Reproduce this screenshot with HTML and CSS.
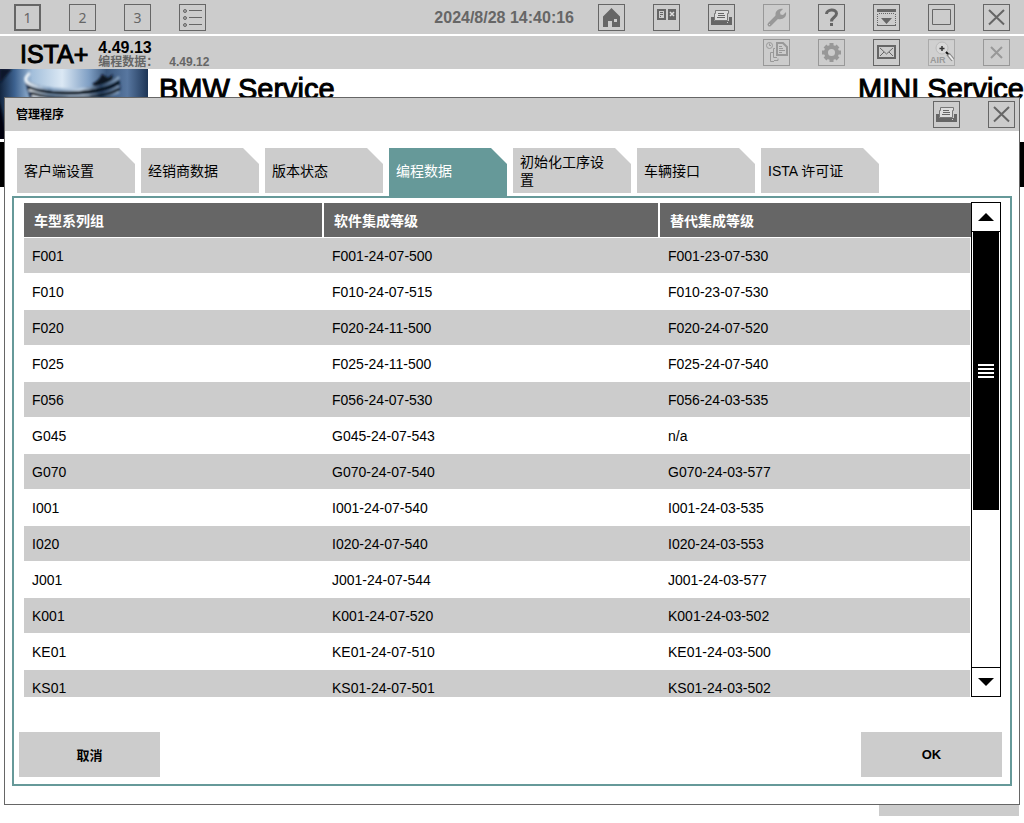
FILE: index.html
```html
<!DOCTYPE html>
<html lang="zh-CN">
<head>
<meta charset="utf-8">
<title>ISTA+</title>
<link rel="stylesheet" href="styles.css">
</head>
<body>
<svg class="defs" aria-hidden="true">
  <symbol id="printer" viewBox="0 0 25 25">
    <path fill="#666" d="M2 12h3v4h15v-4h3v8H2z"/>
    <path fill="#ddd" stroke="#777" d="M6.500 5.500h13v3h-1v7h-13v-7h1z"/>
    <path stroke="#666" d="M9 8.500h6M9 10.500h7M8 12.500h8"/>
    <path fill="#ccc" d="M18 17h1v1h-1z"/>
  </symbol>
  <symbol id="cross" viewBox="0 0 25 25"><path fill="none" stroke="#666" stroke-width="2" d="M5 5L20 19.500M20 5L5 19.500"/></symbol>
</svg>

<header>
  <div class="bar">
    <nav class="icons">
      <button class="icon current">1</button>
      <button class="icon">2</button>
      <button class="icon">3</button>
      <button class="icon" aria-label="List"><svg viewBox="0 0 25 25"><g fill="#aaa" stroke="#666"><circle cx="5" cy="6" r="1.500"/><circle cx="5" cy="13" r="1.500"/><circle cx="5" cy="20" r="1.500"/><path d="M9 5.500h13M9 12.500h13M9 19.500h13"/></g></svg></button>
    </nav>
    <time class="clock">2024/8/28 14:40:16</time>
    <nav class="icons">
      <button class="icon" aria-label="Home"><svg viewBox="0 0 25 25"><path fill="#666" d="M12.500 3L21 11.500V22h-8v-6H9v6H4V11.500z"/><path fill="#ccc" d="M15 14h3v3h-3z"/></svg></button>
      <button class="icon" aria-label="Compare"><svg viewBox="0 0 25 25"><path fill="#666" d="M3 4h9v11H3zM14 4h8v11h-8z"/><path fill="#ccc" d="M5 6h5v7H5z"/><path stroke="#666" d="M6 7.500h3M6 9.500h3M6 11.500h1"/><path stroke="#ddd" stroke-width="1.500" d="M16 7l4 4M20 7l-4 4"/></svg></button>
      <button class="icon" aria-label="Print"><svg><use href="#printer"/></svg></button>
      <button class="icon off" aria-label="Tools"><svg viewBox="0 0 25 25"><path stroke="#666" stroke-width="4" stroke-linecap="round" d="M5.500 19.500L14 11"/><path fill="#666" d="M12 12c-2-5 2-9 7-8l-3 3 .500 2.500 2.500.500 3-3c1 5-3 8-8 7z"/><path fill="#ccc" d="M5 19h1v1H5z"/></svg></button>
      <button class="icon" aria-label="Help"><svg viewBox="0 0 25 25"><path fill="none" stroke="#666" stroke-width="3" d="M7.500 9c0-5 10-5.500 10-.500 0 4-5 3.500-5 8"/><path fill="#666" d="M11 18h3v3h-3z"/></svg></button>
      <button class="icon" aria-label="Minimize"><svg viewBox="0 0 25 25"><path fill="#666" d="M3 4h19v3H3zM7 13h11l-5.500 6z"/><path fill="none" stroke="#666" d="M3 20.500h19"/><path fill="none" stroke="#666" stroke-dasharray="1 1" d="M3.500 9v11M21.500 9v11M5 8.500h16"/></svg></button>
      <button class="icon" aria-label="Maximize"><svg viewBox="0 0 25 25"><path fill="none" stroke="#666" d="M3.500 4.500h18v15h-18z"/></svg></button>
      <button class="icon" aria-label="Close"><svg><use href="#cross"/></svg></button>
    </nav>
  </div>
  <div class="bar second">
    <div class="product">
      <h1>ISTA+</h1>
      <div class="version"><strong>4.49.13</strong><p><span>编程数据：</span><span>4.49.12</span></p></div>
    </div>
    <nav class="icons">
      <button class="icon off" aria-label="History"><svg viewBox="0 0 25 25"><g fill="none" stroke="#666"><circle cx="5.500" cy="5.500" r="3"/><path d="M5.500 3.500v2H7M11 8.500H9.500v9H13M9 12.500H6.500v9H10M14 18.500v2h-4"/><path stroke-width="2" d="M13 3h6l4 4v8H13z"/><path d="M15 6.500h3M15 8.500h4M15 10.500h6M15 12.500h3"/></g></svg></button>
      <button class="icon off" aria-label="Settings"><svg viewBox="0 0 25 25"><circle cx="12.500" cy="12.500" r="5.500" fill="none" stroke="#666" stroke-width="4"/><path stroke="#666" stroke-width="4" d="M12.500 3v4M12.500 18v4M3 12.500h4M18 12.500h4M6 6l2 2M17 17l2 2M19 6l-2 2M8 17l-2 2"/></svg></button>
      <button class="icon" aria-label="Mail"><svg viewBox="0 0 25 25"><g fill="none" stroke="#666"><path stroke-width="2" d="M4 6h17v12H4z"/><path d="M6 8l6.500 6L19 8M6 16l4-4M19 16l-4-4"/></g></svg></button>
      <button class="icon air" aria-label="AIR"><svg viewBox="0 0 25 25"><path fill="#d0d0d0" d="M0 1h25v24H0z"/><circle cx="13" cy="8" r="6" fill="#d8d8d8" stroke="#bbb"/><path stroke="#333" stroke-width="1.500" d="M10.500 8.500h5M13 6v5"/><path stroke="#111" stroke-width="2" d="M17 12l3 3"/><path stroke="#888" stroke-width="4" d="M19 14l5 6"/><path stroke="#eee" stroke-width="2" d="M20 15l4 5"/></svg><span>AIR</span></button>
      <button class="icon off" aria-label="Close task"><svg viewBox="0 0 25 25"><path stroke="#666" stroke-width="2" d="M7 7l11 11M18 7L7 18"/></svg></button>
    </nav>
  </div>
</header>

<main>
  <div class="hero">
    <svg class="photo" viewBox="0 0 148 70" preserveAspectRatio="none" aria-hidden="true">
      <defs>
        <linearGradient id="sky"><stop offset="0" stop-color="#12253f"/><stop offset=".1" stop-color="#3d6290"/><stop offset=".22" stop-color="#a3bfdb"/><stop offset=".42" stop-color="#dbe8f4"/><stop offset=".6" stop-color="#7f9fc4"/><stop offset=".72" stop-color="#3b587d"/><stop offset=".86" stop-color="#5877a0"/><stop offset="1" stop-color="#1d3556"/></linearGradient>
        <linearGradient id="steel"><stop offset="0" stop-color="#f4f9fd"/><stop offset=".25" stop-color="#7f9dbe"/><stop offset=".6" stop-color="#c4d6e8"/><stop offset=".8" stop-color="#27405f"/><stop offset="1" stop-color="#8fabca"/></linearGradient>
        <filter id="soft"><feGaussianBlur stdDeviation=".8"/></filter>
      </defs>
      <path fill="url(#sky)" d="M0 0h148v70H0z"/>
      <g fill="none" filter="url(#soft)">
        <path fill="#0b182b" d="M0 0h12L0 14z"/>
        <path fill="#22395a" d="M25 13c16 12 74 14 94-5l2 12-12 10H30z"/>
        <path fill="#0a1524" d="M92 15q8-4 10-10l6 4 5-4-2 10-12 5z"/>
        <path stroke="#0b1728" stroke-width="3" d="M27 13c22 14 76 10 91-5"/>
        <path stroke="url(#steel)" stroke-width="3" d="M30 4c-7 6-6 10 8 14 28 6 68 3 81-10"/>
        <path stroke="#060e19" stroke-width="3" d="M28 19c22 8 74 7 91-6"/>
        <path stroke="url(#steel)" stroke-width="2" d="M29 21c22 9 74 8 90-4"/>
        <path stroke="#060e19" stroke-width="3" d="M31 24c24 8 72 7 88-4"/>
        <path stroke="url(#steel)" stroke-width="2" d="M32 27c24 6 70 5 87-4"/>
        <path fill="#02060b" d="M-3 28q7 15 9 45h-9z"/>
      </g>
    </svg>
    <h2>BMW Service</h2>
    <h2 class="mini">MINI Service</h2>
  </div>
  <div class="strip"></div>
</main>
<div class="under"></div>

<section class="dialog" role="dialog" aria-labelledby="title">
  <div class="titlebar">
    <h3 id="title">管理程序</h3>
    <div class="icons">
      <button class="icon" aria-label="Print"><svg><use href="#printer"/></svg></button>
      <button class="icon" aria-label="Close"><svg><use href="#cross"/></svg></button>
    </div>
  </div>
  <div class="tabs" role="tablist">
    <button class="tab" role="tab">客户端设置</button>
    <button class="tab" role="tab">经销商数据</button>
    <button class="tab" role="tab">版本状态</button>
    <button class="tab active" role="tab" aria-selected="true">编程数据</button>
    <button class="tab" role="tab">初始化工序设置</button>
    <button class="tab" role="tab">车辆接口</button>
    <button class="tab" role="tab">ISTA 许可证</button>
  </div>
  <div class="panel" role="tabpanel">
    <div class="list">
      <div class="view">
        <table>
          <colgroup><col class="c1"><col class="c2"><col></colgroup>
          <thead><tr><th>车型系列组</th><th>软件集成等级</th><th>替代集成等级</th></tr></thead>
          <tbody>
            <tr><td>F001</td><td>F001-24-07-500</td><td>F001-23-07-530</td></tr>
            <tr><td>F010</td><td>F010-24-07-515</td><td>F010-23-07-530</td></tr>
            <tr><td>F020</td><td>F020-24-11-500</td><td>F020-24-07-520</td></tr>
            <tr><td>F025</td><td>F025-24-11-500</td><td>F025-24-07-540</td></tr>
            <tr><td>F056</td><td>F056-24-07-530</td><td>F056-24-03-535</td></tr>
            <tr><td>G045</td><td>G045-24-07-543</td><td>n/a</td></tr>
            <tr><td>G070</td><td>G070-24-07-540</td><td>G070-24-03-577</td></tr>
            <tr><td>I001</td><td>I001-24-07-540</td><td>I001-24-03-535</td></tr>
            <tr><td>I020</td><td>I020-24-07-540</td><td>I020-24-03-553</td></tr>
            <tr><td>J001</td><td>J001-24-07-544</td><td>J001-24-03-577</td></tr>
            <tr><td>K001</td><td>K001-24-07-520</td><td>K001-24-03-502</td></tr>
            <tr><td>KE01</td><td>KE01-24-07-510</td><td>KE01-24-03-500</td></tr>
            <tr><td>KS01</td><td>KS01-24-07-501</td><td>KS01-24-03-502</td></tr>
          </tbody>
        </table>
      </div>
      <div class="scroll">
        <button class="arrow" aria-label="Up"><svg viewBox="0 0 16 8"><path d="M0 8l8-8 8 8z"/></svg></button>
        <div class="track"><div class="thumb"><i></i><i></i><i></i><i></i></div></div>
        <button class="arrow down" aria-label="Down"><svg viewBox="0 0 16 8"><path d="M0 0l8 8 8-8z"/></svg></button>
      </div>
    </div>
    <div class="actions"><button>取消</button><button>OK</button></div>
  </div>
</section>
</body>
</html>
```
FILE: styles.css
```css
* { box-sizing: border-box; }
body {
  margin: 0;
  min-height: 100vh;
  position: relative;
  overflow: hidden;
  background: #fff;
  color: #000;
  font-family: "Liberation Sans", "Noto Sans CJK SC", sans-serif;
}
h1, h2, h3, p { margin: 0; }
button { font-family: inherit; color: inherit; border: 0; border-radius: 0; padding: 0; }
.defs { position: absolute; width: 0; height: 0; }

.bar {
  display: flex;
  justify-content: space-between;
  height: 34px;
  padding: 4px 14px 0;
  background: #ccc;
}
.bar.second { height: 33px; margin-top: 2px; padding: 3px 14px 0 20px; }
.icons { display: flex; gap: 28px; }
.icon {
  width: 27px;
  height: 27px;
  border: 1px solid #666;
  background: transparent;
  color: #666;
  font: 14px "Noto Sans", sans-serif;
}
.icon svg { display: block; width: 25px; height: 25px; }
.icon.current { border-width: 2px; }
.icon.off { opacity: .5; }
.clock {
  margin-left: auto;
  margin-right: 24px;
  color: #666;
  font-size: 16px;
  font-weight: bold;
  line-height: 27px;
}
.product { display: flex; gap: 10px; }
.product h1 { font-size: 25px; font-weight: normal; line-height: 30px; -webkit-text-stroke: 1px #000; }
.version { padding-top: 1px; }
.version strong { display: block; font-size: 16px; line-height: 16px; }
.version p { display: flex; gap: 11px; color: #666; font-size: 12px; font-weight: bold; line-height: 13px; }
.air { position: relative; border-color: #aaa; color: #999; }
.air span { position: absolute; left: 1px; bottom: 0; font: bold 9px "Liberation Sans", sans-serif; }

.hero { display: flex; height: 70px; }
.photo { width: 148px; height: 70px; }
.hero h2 { margin-left: 11px; font-size: 29px; font-weight: normal; line-height: 41px; -webkit-text-stroke: 1px #000; }
.hero .mini { margin-left: auto; }
.strip { height: 45px; margin-top: 3px; background: #000; }
.under { position: absolute; right: 5px; bottom: 7px; width: 140px; height: 20px; background: #ccc; }

.dialog {
  position: absolute;
  inset: 97px 4px 18px;
  display: flex;
  flex-direction: column;
  border: 1px solid #666;
  background: #fff;
}
.titlebar {
  display: flex;
  justify-content: space-between;
  height: 33px;
  padding: 3px 4px 0 11px;
  background: #ccc;
}
.titlebar h3 { font-size: 12px; line-height: 29px; }
.tabs { display: flex; gap: 6px; height: 48px; margin: 17px 12px 0; }
.tab {
  width: 118px;
  height: 45px;
  padding: 0 20px 0 7px;
  background: #ccc;
  clip-path: polygon(0 0, calc(100% - 16px) 0, 100% 16px, 100% 100%, 0 100%);
  font-size: 14px;
  line-height: 18px;
  text-align: left;
}
.tab.active { height: 48px; padding-bottom: 3px; background: #699; color: #fff; }
.panel {
  flex: 1;
  min-height: 0;
  display: flex;
  flex-direction: column;
  margin: 0 7px 18px;
  border: 2px solid #699;
  padding: 4px 8px 7px 5px;
}
.list { flex: 1; min-height: 0; display: flex; padding: 0 1px 0 5px; }
.view { flex: 1; overflow: hidden; padding-top: 1px; }
table { width: 100%; table-layout: fixed; border-collapse: separate; border-spacing: 0; font-size: 14px; }
.c1 { width: 300px; }
.c2 { width: 336px; }
th {
  height: 35px;
  padding: 0 10px;
  border-right: 2px solid #fff;
  border-bottom: 1px solid #fff;
  background: #666;
  color: #fff;
  text-align: left;
}
th:last-child { border-right: 0; }
td { height: 36px; padding: 0 8px; border-bottom: 1px solid #fff; }
td:last-child { border-right: 1px solid #fff; }
tbody tr:nth-child(odd) { background: #ccc; }
.scroll { display: flex; flex-direction: column; width: 30px; border: 1px solid #000; }
.arrow { display: grid; place-items: center; height: 29px; background: #fff; border-bottom: 1px solid #000; }
.arrow.down { border-bottom: 0; border-top: 1px solid #000; }
.arrow svg { width: 16px; height: 8px; }
.track { flex: 1; padding: 0 1px; }
.thumb {
  height: 64%;
  display: flex;
  flex-direction: column;
  align-items: center;
  justify-content: center;
  gap: 2px;
  background: #000;
}
.thumb i { width: 16px; height: 2px; background: #fff; }
.actions { display: flex; justify-content: space-between; margin-top: 35px; }
.actions button { width: 141px; height: 45px; background: #ccc; font-size: 13px; font-weight: bold; }
```
